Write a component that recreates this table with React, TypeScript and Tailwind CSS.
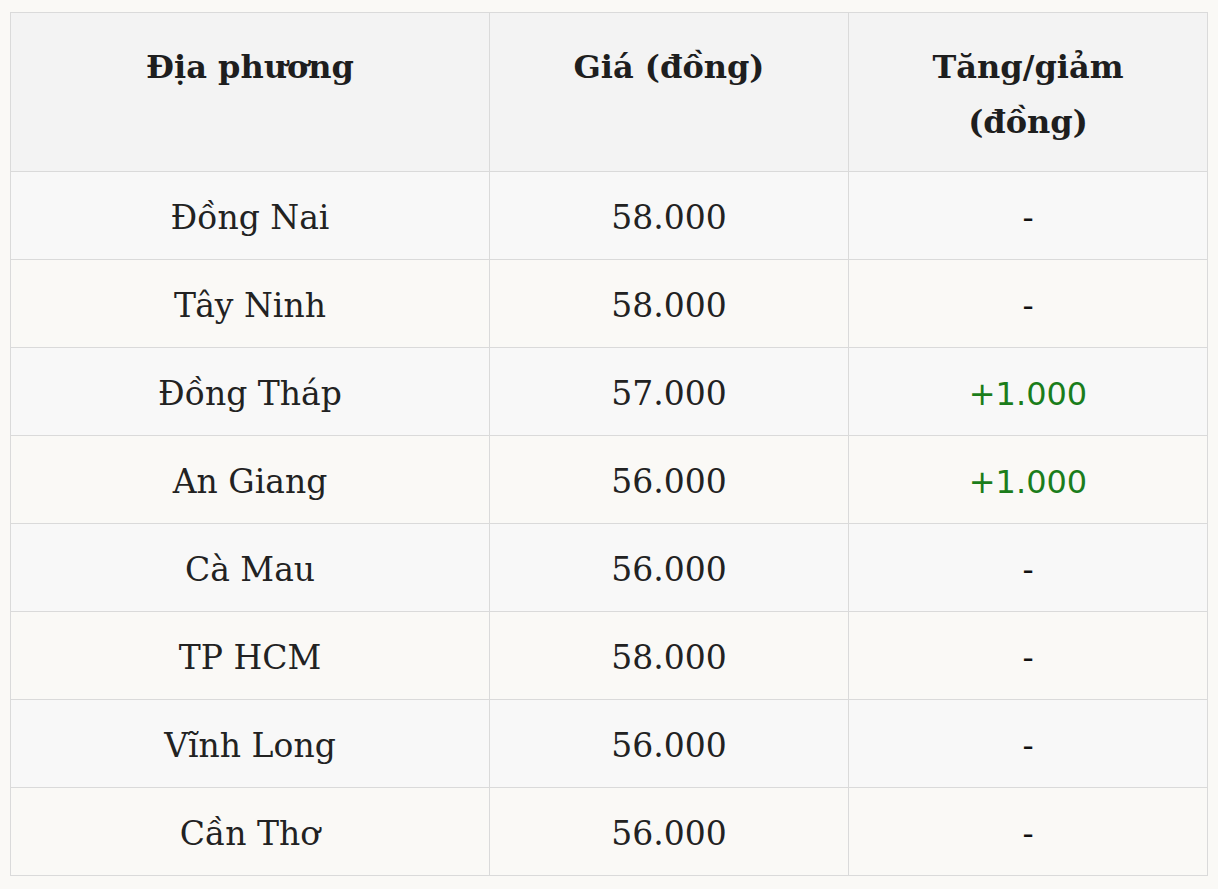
import React from "react";

type Row = { place: string; price: string; change: string };

const rows: Row[] = [
    { place: "Đồng Nai", price: "58.000", change: "-" },
    { place: "Tây Ninh", price: "58.000", change: "-" },
    { place: "Đồng Tháp", price: "57.000", change: "+1.000" },
    { place: "An Giang", price: "56.000", change: "+1.000" },
    { place: "Cà Mau", price: "56.000", change: "-" },
    { place: "TP HCM", price: "58.000", change: "-" },
    { place: "Vĩnh Long", price: "56.000", change: "-" },
    { place: "Cần Thơ", price: "56.000", change: "-" },
];

export default function App() {
    return (
        <div className="min-h-screen bg-[#faf9f6] pt-[12px] pl-[10px] font-['DejaVu_Serif',serif] text-[#222]">
            <table className="table-fixed border-collapse border border-[#dadada] w-[1198px]">
                <thead>
                    <tr className="bg-[#f3f3f3]">
                        <th className="w-[479px] border border-[#dadada] align-top pt-[27px] pb-[21px] px-4 text-[32px] leading-[55px] font-bold text-[#1e1e1e]">
                            Địa phương
                        </th>
                        <th className="w-[359px] border border-[#dadada] align-top pt-[27px] pb-[21px] px-4 text-[32px] leading-[55px] font-bold text-[#1e1e1e]">
                            Giá (đồng)
                        </th>
                        <th className="border border-[#dadada] align-top pt-[27px] pb-[21px] px-4 text-[32px] leading-[55px] font-bold text-[#1e1e1e]">
                            Tăng/giảm
                            <br />
                            (đồng)
                        </th>
                    </tr>
                </thead>
                <tbody>
                    {rows.map((r, i) => (
                        <tr key={r.place} className={i % 2 === 0 ? "bg-[#f8f8f8]" : "bg-[#faf9f6]"}>
                            <td className="h-[88px] border border-[#dadada] text-center align-middle pt-[5px] pb-0 px-4 text-[33px] leading-[40px]">
                                {r.place}
                            </td>
                            <td className="h-[88px] border border-[#dadada] text-center align-middle pt-[5px] pb-0 px-4 text-[33px] leading-[40px]">
                                {r.price}
                            </td>
                            <td className="h-[88px] border border-[#dadada] text-center align-middle pt-[5px] pb-0 px-4 text-[33px] leading-[40px]">
                                {r.change === "-" ? (
                                    <span className="text-[#111]">-</span>
                                ) : (
                                    <span className="font-['DejaVu_Sans',sans-serif] text-[32px] leading-[40px] text-[#1b7d1b]">{r.change}</span>
                                )}
                            </td>
                        </tr>
                    ))}
                </tbody>
            </table>
        </div>
    );
}
